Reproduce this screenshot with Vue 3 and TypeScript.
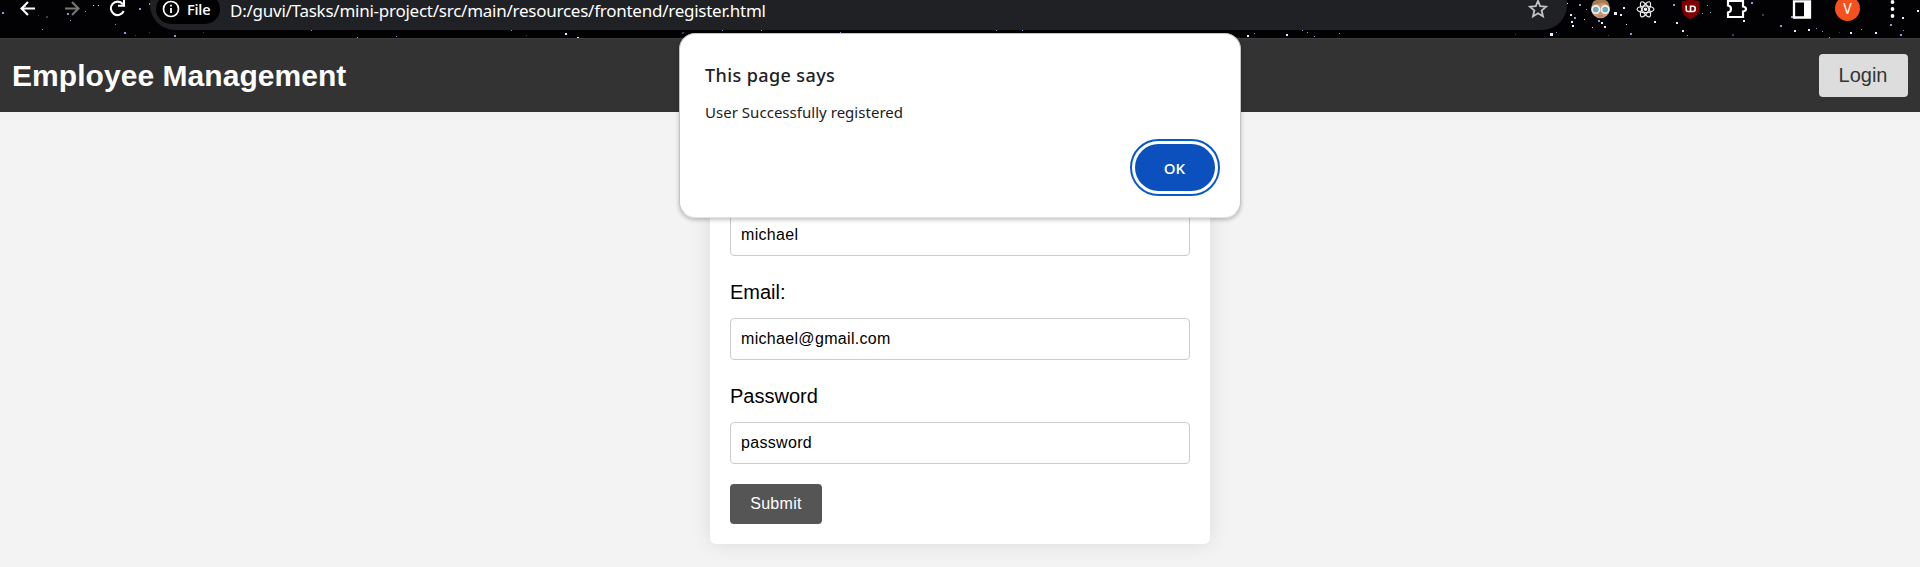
<script setup lang="ts">
interface Star { x: number; y: number; s: number; c: string }

const white = '#e8f0fa'
const blue = '#7f9fd0'
const dim = '#34405c'

const stars: Star[] = [
  [2, 12, 2, blue], [25, 6, 1, blue], [38, 15, 1, dim], [46, 16, 2, dim], [42, 29, 1, blue], [67, 13, 2, blue], [70, 20, 1, blue], [85, 11, 1, blue], [93, 5, 1, white],
  [98, 5, 1, white], [115, 24, 1, blue], [124, 32, 2, blue], [139, 8, 2, blue], [149, 3, 2, blue],
  [135, 35, 1, dim], [149, 32, 1, dim], [174, 35, 2, blue], [203, 32, 1, dim], [311, 30, 1, blue], [357, 37, 1, blue], [396, 36, 1, blue],
  [511, 30, 1, blue], [526, 35, 1, dim], [565, 33, 2, white], [577, 37, 2, white], [682, 32, 2, dim], [722, 30, 1, blue], [761, 30, 1, blue],
  [840, 32, 1, blue], [996, 30, 1, blue], [1022, 30, 1, blue], [1190, 36, 1, dim], [1247, 35, 2, white], [1254, 33, 1, blue],
  [1286, 34, 2, white], [1302, 30, 1, blue], [1307, 32, 1, blue], [1314, 36, 1, blue], [1339, 33, 1, blue],
  [1515, 34, 1, dim], [1550, 33, 3, white], [1556, 32, 1, blue], [1567, 3, 1, white], [1570, 14, 2, white], [1571, 21, 2, white],
  [1574, 17, 2, blue], [1572, 25, 2, white], [1579, 4, 2, blue], [1584, 19, 1, white], [1586, 9, 1, blue], [1592, 27, 1, white],
  [1598, 20, 2, blue], [1601, 22, 2, white], [1604, 26, 2, white], [1608, 35, 1, dim], [1614, 12, 3, white], [1620, 14, 2, white],
  [1623, 7, 2, white], [1626, 24, 1, white], [1630, 33, 2, blue], [1646, 5, 1, white], [1654, 21, 2, white], [1673, 4, 2, blue],
  [1676, 22, 2, white], [1682, 30, 2, white], [1687, 35, 1, blue], [1702, 13, 1, blue], [1707, 5, 1, blue],
  [1710, 12, 1, blue], [1732, 34, 2, dim], [1743, 20, 2, white], [1751, 2, 2, blue], [1762, 14, 2, dim], [1780, 25, 2, blue],
  [1791, 16, 2, blue], [1794, 30, 2, white], [1808, 29, 2, white], [1816, 28, 1, blue], [1822, 31, 1, blue], [1829, 37, 1, blue],
  [1839, 32, 1, dim], [1850, 32, 2, white], [1861, 29, 1, blue], [1875, 32, 2, white], [1890, 24, 2, blue],
  [1900, 34, 2, blue], [1902, 17, 2, white], [1903, 30, 1, blue], [1917, 10, 2, white],
].map(([x, y, s, c]) => ({ x, y, s, c }) as Star)

const fields = [
  { id: 'name', label: 'Name:', value: 'michael' },
  { id: 'email', label: 'Email:', value: 'michael@gmail.com' },
  { id: 'password', label: 'Password', value: 'password' },
]
</script>

<template>
  <div class="window">
    <div class="toolbar">
      <svg class="stars" width="1920" height="38" aria-hidden="true">
        <rect v-for="(s, i) in stars" :key="i" :x="s.x" :y="s.y" :width="s.s" :height="s.s" :fill="s.c" />
      </svg>
      <div class="nav">
        <svg width="18" height="38" viewBox="0 0 18 38"><path d="M16 8.5H3M9 2L2.500 8.500L9 15" /></svg>
        <svg class="disabled" width="18" height="38" viewBox="0 0 18 38"><path d="M1 8.500H14M8 2L14.500 8.500L8 15" /></svg>
        <svg width="18" height="38" viewBox="0 0 18 38"><path d="M14.700 11A6.700 6.700 0 1 1 13.800 4.200M15 0V5.700H9" /></svg>
      </div>
      <div class="address">
        <div class="chip">
          <svg width="18" height="18" viewBox="0 0 18 18">
            <circle cx="9" cy="9" r="7.500" fill="none" stroke="#fff" stroke-width="1.700" />
            <path d="M9 8V13M9 4.800V6.600" stroke="#fff" stroke-width="1.800" />
          </svg>
          <span>File</span>
        </div>
        <span class="url">D:/guvi/Tasks/mini-project/src/main/resources/frontend/register.html</span>
        <svg class="bookmark" width="20" height="20" viewBox="0 0 20 20">
          <path d="M10 1.800L12.200 7.200L18.100 7.700L13.600 11.500L15 17.400L10 14.200L5 17.400L6.400 11.500L1.900 7.700L7.800 7.200Z" fill="none" stroke="#c4c4c4" stroke-width="1.800" />
        </svg>
      </div>
      <svg class="extensions" width="340" height="38" viewBox="1580 0 340 38">
        <g>
          <circle cx="1600.500" cy="9" r="9.300" fill="#ce9877" />
          <path d="M1592 6Q1592 0 1597 0H1605Q1609 1 1609 6L1604 3L1596 4Z" fill="#a67c52" />
          <circle cx="1595.800" cy="9.500" r="3.700" fill="#75a9b5" stroke="#eaf5f5" stroke-width="1.700" />
          <circle cx="1605.200" cy="9.500" r="3.700" fill="#75a9b5" stroke="#eaf5f5" stroke-width="1.700" />
          <path d="M1598 16H1603" stroke="#a56a55" />
        </g>
        <g fill="none" stroke="#eee" stroke-width="1.200">
          <ellipse cx="1645.500" cy="9.300" rx="8.500" ry="3.300" />
          <ellipse cx="1645.500" cy="9.300" rx="8.500" ry="3.300" transform="rotate(60 1645.500 9.300)" />
          <ellipse cx="1645.500" cy="9.300" rx="8.500" ry="3.300" transform="rotate(120 1645.500 9.300)" />
          <circle cx="1645.500" cy="9.300" r="1.200" fill="#fff" />
        </g>
        <path d="M1682 1Q1687 1 1690.500 -1Q1694 1 1699.500 1V9Q1699 15 1690.500 19.500Q1682 15 1682 9Z" fill="#800000" />
        <path d="M1686.200 5.500V9.500Q1686.200 11.500 1688.200 11.500H1693Q1695.200 11.500 1695.200 9V8.500Q1695.200 6.300 1693 6.300H1690.500V11.500" fill="none" stroke="#fff" stroke-width="1.600" />
        <path d="M1728 1H1743V6.500Q1746 7 1746 9T1743 11.500V17H1728V12.500Q1731 12 1731 9T1728 5.500Z" fill="none" stroke="#fff" stroke-width="2.200" />
        <path d="M1794 1.300H1810V17.500H1794Z" fill="none" stroke="#fff" stroke-width="2.300" />
        <path d="M1804 1H1811V18H1804Z" fill="#fff" />
        <circle cx="1847.500" cy="8.500" r="12.500" fill="#f4511e" />
        <text x="1847.500" y="13.500" fill="#fff" font-size="14" text-anchor="middle" font-family="Roboto, sans-serif">V</text>
        <g fill="#fff"><circle cx="1892.500" cy="2" r="1.900" /><circle cx="1892.500" cy="9" r="1.900" /><circle cx="1892.500" cy="16" r="1.900" /></g>
      </svg>
    </div>

    <header class="header">
      <h1>Employee Management</h1>
      <button class="login" type="button">Login</button>
    </header>

    <main class="page">
      <form class="card" @submit.prevent>
        <div v-for="f in fields" :key="f.id" class="field">
          <label :for="f.id">{{ f.label }}</label>
          <input :id="f.id" type="text" :value="f.value" />
        </div>
        <button class="submit" type="submit">Submit</button>
      </form>
    </main>

    <div class="dialog" role="alertdialog">
      <h2>This page says</h2>
      <p>User Successfully registered</p>
      <button class="ok" type="button">OK</button>
    </div>
  </div>
</template>

<style>
body { margin: 0; overflow: hidden; }
</style>

<style scoped>
* { box-sizing: border-box; }
.window { position: relative; height: 567px; overflow: hidden; background: #f3f3f3; font-family: "Liberation Sans", Arial, sans-serif; }
.toolbar { position: relative; display: flex; height: 38px; background: #020205; overflow: hidden; }
.stars { position: absolute; inset: 0; }
.nav { position: relative; display: flex; gap: 27px; width: 150px; flex: none; padding-left: 19px; }
.nav svg { flex: none; fill: none; stroke: #fff; stroke-width: 2.1; }
.nav .disabled { stroke: #777; }
.address { position: relative; display: flex; width: 1417px; height: 50px; margin-top: -20px; padding: 14px 19px 0 6px; border-radius: 25px; background: #202124; color: #fff; font-family: "Noto Sans", sans-serif; }
.chip { display: flex; align-items: center; gap: 7px; width: 64px; height: 30px; padding-left: 6px; border-radius: 15px; background: #000; font-weight: 600; font-family: "Open Sans", sans-serif; }
.chip span { display: block; font-size: 14.5px; letter-spacing: -0.2px; }
.url { flex: 1; margin-left: 10px; padding-top: 8px; font-size: 17px; line-height: 18px; letter-spacing: -0.25px; white-space: nowrap; }
.bookmark { margin-top: 5px; }
.extensions { position: relative; margin-left: 13px; }
.header { display: flex; align-items: center; justify-content: space-between; height: 74px; padding: 0 12px; background: #333; border-top: 1px solid #3e3e3e; }
h1 { margin: 0; padding-bottom: 1px; color: #fff; font-size: 30px; line-height: 35px; letter-spacing: 0.05px; }
.login { width: 89px; height: 43px; padding: 0 1px 0 0; border: 0; border-radius: 4px; background: #ddd; color: #333; font: 20px "Liberation Sans", Arial, sans-serif; }
.page { display: flex; justify-content: center; padding-top: 40px; }
.card { width: 500px; height: 392px; padding: 20px; border-radius: 6px; background: #fff; box-shadow: 0 0 20px rgba(0, 0, 0, .1); }
.field { height: 104px; }
label { display: block; height: 42px; padding-top: 5px; font-size: 20px; line-height: 23px; color: #000; }
input { display: block; width: 460px; height: 42px; padding: 0 10px; border: 1px solid #ccc; border-radius: 4px; background: #fff; color: #000; font: 16px "Liberation Sans", Arial, sans-serif; letter-spacing: 0.32px; }
.submit { display: block; width: 92px; height: 40px; padding: 0; border: 0; border-radius: 4px; background: #555; color: #fff; font: 16px "Liberation Sans", Arial, sans-serif; letter-spacing: 0.3px; }
.dialog { position: absolute; top: 33px; left: 679px; display: flex; flex-direction: column; width: 562px; height: 185px; padding: 28px 25px 24px 25px; border: 1px solid #c4c4c4; border-bottom-color: #e0e4e2; border-radius: 16px; background: #fff; box-shadow: 0 2px 4px rgba(0, 0, 0, .24); color: #202124; font-family: "Noto Sans", sans-serif; }
h2 { margin: 0; font-size: 18px; font-weight: 500; line-height: 26px; letter-spacing: 0.4px; }
p { margin: 14px 0 0; font-size: 15px; line-height: 20px; letter-spacing: 0.03px; }
.ok { align-self: flex-end; width: 80px; height: 47px; margin-top: 22px; padding: 0 1px 0 0; border: 0; border-radius: 24px; background: #0b50bd; color: #fff; outline: 2px solid #0b57d0; outline-offset: 3px; font: 600 15px "Open Sans", sans-serif; }
</style>
